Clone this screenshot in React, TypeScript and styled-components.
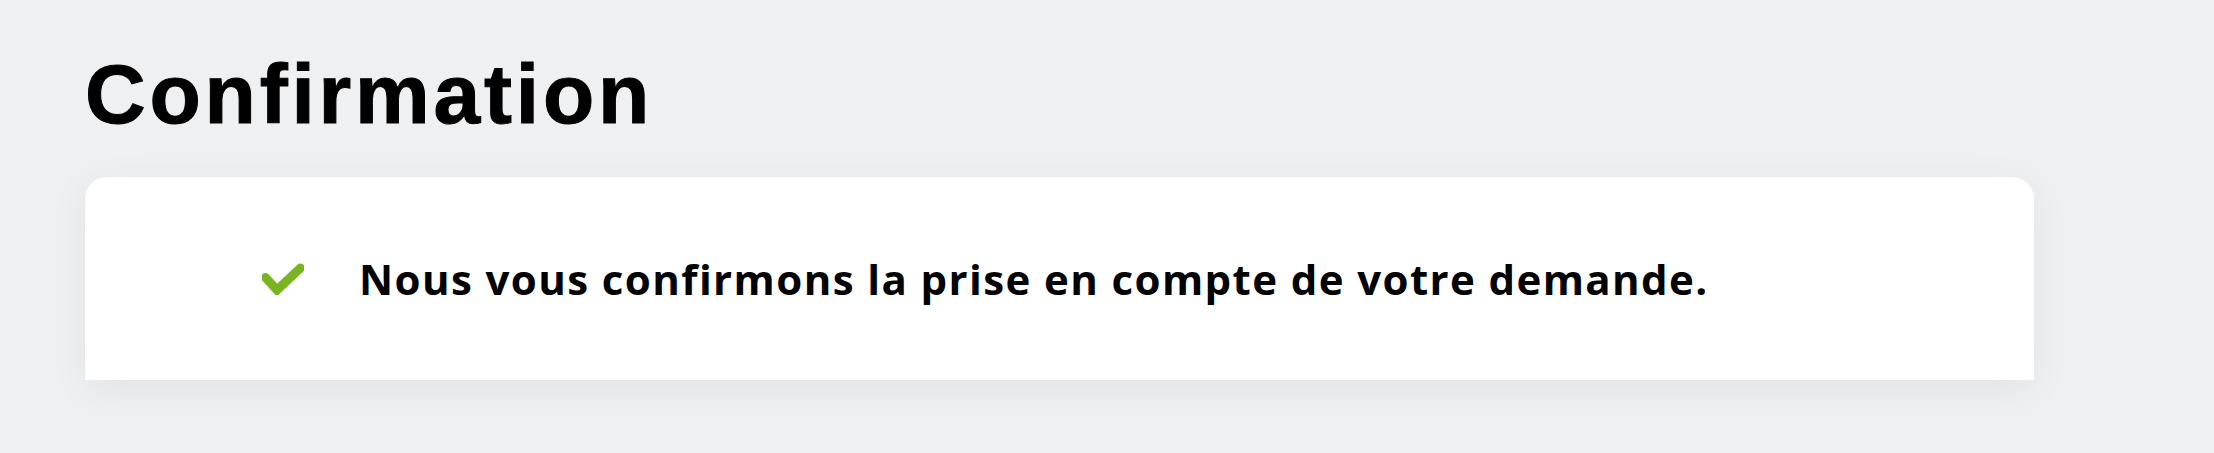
import styled, {createGlobalStyle} from 'styled-components';

const GlobalStyle = createGlobalStyle`
    html, body {
        margin: 0;
        padding: 0;
        background-color: #eff0f2;
    }

    body {
        font-family: "Liberation Sans", Arial, sans-serif;
        color: #000000;
    }
`;

const Page = styled.main`
    box-sizing: border-box;
    min-height: 453px;
    padding: 52px 180px 0 85px;
`;

const Title = styled.h1`
    margin: 0 0 41px 0;
    font-size: 84px;
    line-height: 84px;
    font-weight: 700;
    letter-spacing: 3.8px;
    -webkit-text-stroke: 1px #000000;
`;

const Card = styled.section`
    box-sizing: border-box;
    width: 1949px;
    background-color: #ffffff;
    border-radius: 22px 22px 0 0;
    box-shadow: 0 8px 40px rgba(0, 0, 0, 0.06);
    padding: 80px 0 80px 177px;
    display: flex;
    align-items: center;
    gap: 55px;
`;

const CheckIcon = styled.svg`
    flex-shrink: 0;
    width: 42px;
    height: 32px;
`;

const Message = styled.p`
    margin: 0;
    font-family: "Open Sans", "Liberation Sans", sans-serif;
    font-size: 42px;
    line-height: 43px;
    font-weight: 700;
    letter-spacing: 1.4px;
`;

export default function App() {
    return (
        <>
            <GlobalStyle/>
            <Page>
                <Title>Confirmation</Title>
                <Card>
                    <CheckIcon viewBox="0 0 42 32" aria-hidden="true">
                        <path d="M3.5 14.5 L15 27 L38.5 5" fill="none" stroke="#78b51e" strokeWidth="9"
                              strokeLinecap="round" strokeLinejoin="miter"/>
                    </CheckIcon>
                    <Message>Nous vous confirmons la prise en compte de votre demande.</Message>
                </Card>
            </Page>
        </>
    );
}
